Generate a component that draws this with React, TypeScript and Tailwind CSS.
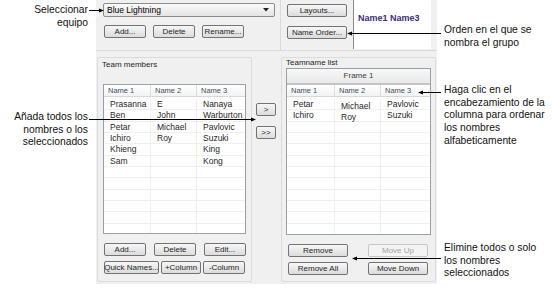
import type { ReactNode } from "react";
import clsx from "clsx";

function Btn({
  children,
  className,
  disabled,
}: {
  children: ReactNode;
  className: string;
  disabled?: boolean;
}) {
  return (
    <div
      className={clsx(
        "flex h-[13px] shrink-0 items-center justify-center rounded-[2px] border text-[8px] leading-none whitespace-nowrap",
        disabled
          ? "border-[#c6c6c6] bg-[#f4f4f4] text-[#a3a3a3]"
          : "border-[#737373] bg-linear-to-b from-[#f7f7f7] to-[#dcdcdc] text-[#1f1f1f]",
        className
      )}
    >
      {children}
    </div>
  );
}

type Row = [string, string, string];

const teamMembers: Row[] = [
  ["Prasanna", "E", "Nanaya"],
  ["Ben", "John", "Warburton"],
  ["Petar", "Michael", "Pavlovic"],
  ["Ichiro", "Roy", "Suzuki"],
  ["Khieng", "", "King"],
  ["Sam", "", "Kong"],
];

const teamnames: Row[] = [
  ["Petar", "Michael", "Pavlovic"],
  ["Ichiro", "Roy", "Suzuki"],
];

function NameList({
  rows,
  total,
  cols,
  frame,
  className,
}: {
  rows: Row[];
  total: number;
  cols: [string, string, string];
  frame?: boolean;
  className: string;
}) {
  const filled = [...rows, ...Array.from({ length: total - rows.length }, () => ["", "", ""] as Row)];
  return (
    <div className={clsx("flex flex-col overflow-hidden border border-[#9aa0a8] bg-white", className)}>
      {frame && (
        <div className="flex h-[16px] shrink-0 items-center justify-center border-b-2 border-[#c4c4c4] bg-linear-to-b from-[#f8f8f8] to-[#e9e9e9] text-[8px] text-[#3d3d3d]">
          Frame 1
        </div>
      )}
      <div className="flex h-[12px] shrink-0 border-b border-[#d8d8d8] bg-linear-to-b from-white to-[#f3f3f3] text-[7.5px] leading-[12px] text-[#3f4f60]">
        {["Name 1", "Name 2", "Name 3"].map((h, i) => (
          <div key={h} className={clsx(cols[i], "border-r border-[#dedede] pl-[4px] last:border-r-0")}>
            {h}
          </div>
        ))}
      </div>
      <div className="flex flex-col pt-[2px]">
        {filled.map((r, ri) => (
          <div key={ri} className="flex h-[11.35px] shrink-0 border-b border-[#efefef] text-[8.5px] leading-[11px] text-[#262626]">
            {r.map((c, ci) => (
              <div
                key={ci}
                className={clsx(
                  cols[ci],
                  "border-r border-[#efefef] pl-[6px] last:border-r-0",
                  frame && ci === 1 && "pt-[2px]"
                )}
              >
                {c}
              </div>
            ))}
          </div>
        ))}
      </div>
    </div>
  );
}

function Dialog() {
  return (
    <div className="flex h-[284px] w-[341px] shrink-0 flex-col bg-[#f0f0f0] font-['Liberation_Sans',Arial,sans-serif] text-[8px] text-[#1e1e1e]">
      <div className="flex h-[51px] shrink-0">
        <div className="flex w-[185px] flex-col border-r border-b border-[#dadada] pt-[3px] pl-[7px]">
          <div className="flex h-[14px] w-[172px] items-center justify-between rounded-[2px] border border-[#8c8c8c] bg-linear-to-b from-[#fafafa] to-[#e4e4e4] pr-[5px] pl-[3px] text-[8.5px] text-black">
            <span>Blue Lightning</span>
            <svg width="6" height="4" viewBox="0 0 6 4">
              <path d="M0 0 H6 L3 3.5 Z" fill="#222" />
            </svg>
          </div>
          <div className="mt-[8px] flex gap-[7px] pl-[1px]">
            <Btn className="w-[42px]">Add...</Btn>
            <Btn className="w-[42px]">Delete</Btn>
            <Btn className="w-[42px]">Rename...</Btn>
          </div>
        </div>
        <div className="flex flex-1 border-b border-[#dadada]">
          <div className="flex flex-col gap-[9px] pt-[4px] pl-[6px]">
            <Btn className="w-[60px]">Layouts...</Btn>
            <Btn className="w-[60px]">Name Order...</Btn>
          </div>
          <div className="ml-[6px] flex h-[49px] w-[78px] border-l border-[#8a8a8a] bg-white pt-[13px] pl-[4px]">
            <span className="text-[9px] leading-[10px] font-bold whitespace-nowrap text-[#3a2c7a]">Name1 Name3</span>
          </div>
        </div>
      </div>

      <div className="mt-[6px] flex h-[225px]">
        <div className="ml-[1px] flex w-[155px] flex-col rounded-[2px] border border-[#dcdcdc] pt-[2px] pl-[4px]">
          <span className="leading-[10px]">Team members</span>
          <NameList
            rows={teamMembers}
            total={12}
            cols={["w-[47px]", "w-[46px]", "flex-1"]}
            className="mt-[14px] ml-[1px] h-[150px] w-[143px]"
          />
          <div className="mt-[9px] flex gap-[8px] pl-[2px]">
            <Btn className="w-[42px]">Add...</Btn>
            <Btn className="w-[42px]">Delete</Btn>
            <Btn className="w-[42px]">Edit...</Btn>
          </div>
          <div className="mt-[5px] flex gap-[2px] pl-[2px]">
            <Btn className="w-[55px]">Quick Names...</Btn>
            <Btn className="w-[40px]">+Column</Btn>
            <Btn className="w-[42px]">-Column</Btn>
          </div>
        </div>

        <div className="flex w-[29px] flex-col gap-[10px] pt-[46px] pl-[4px]">
          <Btn className="w-[20px]">&gt;</Btn>
          <Btn className="w-[20px]">&gt;&gt;</Btn>
        </div>

        <div className="flex w-[155px] flex-col rounded-[2px] border border-[#dcdcdc] pt-[1px] pl-[4px]">
          <span className="leading-[8px]">Teamname list</span>
          <NameList
            rows={teamnames}
            total={12}
            frame
            cols={["w-[48px]", "w-[46px]", "flex-1"]}
            className="mt-[1px] h-[167px] w-[145px]"
          />
          <div className="mt-[9px] flex gap-[20px] pl-[2px]">
            <Btn className="w-[60px]">Remove</Btn>
            <Btn className="w-[60px]" disabled>
              Move Up
            </Btn>
          </div>
          <div className="mt-[5px] flex gap-[20px] pl-[2px]">
            <Btn className="w-[60px]">Remove All</Btn>
            <Btn className="w-[60px]">Move Down</Btn>
          </div>
        </div>
      </div>
    </div>
  );
}

export default function App() {
  return (
    <div className="relative flex h-[297px] w-[556px] overflow-hidden bg-white font-['Liberation_Sans',Arial,sans-serif] text-[10.3px] leading-[12.6px] text-[#111]">
      <div className="flex w-[96px] shrink-0 flex-col pr-[8px] text-right whitespace-nowrap">
        <p className="mt-[4px]">
          Seleccionar
          <br />
          equipo
        </p>
        <p className="mt-[82px]">
          Añada todos los
          <br />
          nombres o los
          <br />
          seleccionados
        </p>
      </div>

      <Dialog />

      <div className="flex flex-1 flex-col pl-[7px] whitespace-nowrap">
        <p className="mt-[24px]">
          Orden en el que se
          <br />
          nombra el grupo
        </p>
        <p className="mt-[35px]">
          Haga clic en el
          <br />
          encabezamiento de la
          <br />
          columna para ordenar
          <br />
          los nombres
          <br />
          alfabeticamente
        </p>
        <p className="mt-[95px]">
          Elimine todos o solo
          <br />
          los nombres
          <br />
          seleccionados
        </p>
      </div>

      {/* callout lines */}
      <svg className="pointer-events-none absolute inset-0" width="556" height="297" viewBox="0 0 556 297">
        <g stroke="#000" strokeWidth="1" shapeRendering="crispEdges">
          <line x1="89" y1="10.5" x2="100" y2="10.5" />
          <line x1="351" y1="33.5" x2="441" y2="33.5" />
          <line x1="89" y1="119.5" x2="252" y2="119.5" />
          <line x1="422" y1="92.5" x2="441" y2="92.5" />
          <line x1="356" y1="258.5" x2="441" y2="258.5" />
        </g>
        <g fill="#000">
          <polygon points="104,10.5 99,8.5 99,12.5" />
          <polygon points="347,33.5 352,31.5 352,35.5" />
          <polygon points="256,119.5 251,117.5 251,121.5" />
          <polygon points="418,92.5 423,90.5 423,94.5" />
          <polygon points="352,258.5 357,256.5 357,260.5" />
        </g>
      </svg>
    </div>
  );
}
